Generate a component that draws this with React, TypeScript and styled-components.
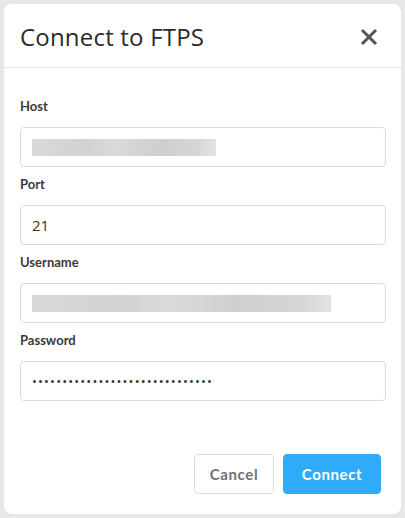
import React from 'react';
import styled, { createGlobalStyle } from 'styled-components';

const GlobalStyle = createGlobalStyle`
  html, body {
    margin: 0;
    padding: 0;
    background: #e7e7e7;
  }
  body {
    font-family: Lato, "Liberation Sans", sans-serif;
  }
`;

const Backdrop = styled.div`
  width: 405px;
  height: 518px;
  padding: 4px;
  box-sizing: border-box;
  display: flex;
  overflow: hidden;
`;

const Modal = styled.div`
  flex: 1;
  background: #fff;
  border-radius: 8px;
  display: flex;
  flex-direction: column;
  overflow: hidden;
`;

const Header = styled.div`
  height: 64px;
  padding: 2px 22px 0 16px;
  display: flex;
  align-items: center;
  justify-content: space-between;
  border-bottom: 1px solid #e6e6e6;
  box-sizing: border-box;
`;

const Title = styled.h2`
  margin: 0;
  font-family: "Open Sans", "Liberation Sans", sans-serif;
  font-weight: 400;
  font-size: 24px;
  color: #2b2b2b;
  letter-spacing: 0.2px;
`;

const CloseButton = styled.button`
  border: 0;
  background: none;
  padding: 0;
  width: 20px;
  height: 20px;
  display: flex;
  align-items: center;
  justify-content: center;
  cursor: pointer;
`;

const Body = styled.div`
  padding: 29px 15px 0 16px;
  display: flex;
  flex-direction: column;
  gap: 8px;
`;

const Field = styled.div`
  display: flex;
  flex-direction: column;
  gap: 12px;
`;

const Label = styled.label`
  font-size: 13px;
  line-height: 18px;
  font-weight: 700;
  color: #3a3a3a;
`;

const InputBox = styled.div`
  height: 40px;
  box-sizing: border-box;
  border: 1px solid #dcdcdc;
  border-radius: 4px;
  padding: 0 11px;
  display: flex;
  align-items: center;
  font-family: "Open Sans", "Liberation Sans", sans-serif;
  font-size: 15px;
  color: #333;
`;

const Blurred = styled.span<{ w: number }>`
  display: block;
  width: ${p => p.w}px;
  height: 17px;
  background: linear-gradient(90deg, #d9d9d9 0%, #d2d2d2 30%, #dadada 45%, #cfcfcf 70%, #d6d6d6 90%, #e4e4e4 100%);
  filter: blur(0.6px);
`;

const Dots = styled.span`
  font-size: 13px;
  letter-spacing: 1.15px;
  color: #333;
`;

const Footer = styled.div`
  margin-top: auto;
  padding: 0 20px 20px;
  display: flex;
  justify-content: flex-end;
  gap: 9px;
`;

const Button = styled.button<{ primary?: boolean }>`
  height: 40px;
  box-sizing: border-box;
  border-radius: 4px;
  font-family: Lato, "Liberation Sans", sans-serif;
  font-weight: 700;
  font-size: 15px;
  letter-spacing: 0.6px;
  cursor: pointer;
  border: 1px solid ${p => (p.primary ? '#2eabfa' : '#dcdcdc')};
  background: ${p => (p.primary ? '#2eabfa' : '#fff')};
  color: ${p => (p.primary ? '#fff' : '#727272')};
  width: ${p => (p.primary ? '98px' : '80px')};
`;

const CloseIcon = () => (
  <svg width="18" height="18" viewBox="0 0 18 18">
    <path d="M2 2 L16 16 M16 2 L2 16" stroke="#555" strokeWidth="3" strokeLinecap="butt" />
  </svg>
);

export default function App() {
  return (
    <>
      <GlobalStyle />
      <Backdrop>
        <Modal>
          <Header>
            <Title>Connect to FTPS</Title>
            <CloseButton aria-label="Close">
              <CloseIcon />
            </CloseButton>
          </Header>
          <Body>
            <Field>
              <Label>Host</Label>
              <InputBox>
                <Blurred w={184} />
              </InputBox>
            </Field>
            <Field>
              <Label>Port</Label>
              <InputBox>21</InputBox>
            </Field>
            <Field>
              <Label>Username</Label>
              <InputBox>
                <Blurred w={299} />
              </InputBox>
            </Field>
            <Field>
              <Label>Password</Label>
              <InputBox>
                <Dots>{'•'.repeat(30)}</Dots>
              </InputBox>
            </Field>
          </Body>
          <Footer>
            <Button>Cancel</Button>
            <Button primary>Connect</Button>
          </Footer>
        </Modal>
      </Backdrop>
    </>
  );
}
